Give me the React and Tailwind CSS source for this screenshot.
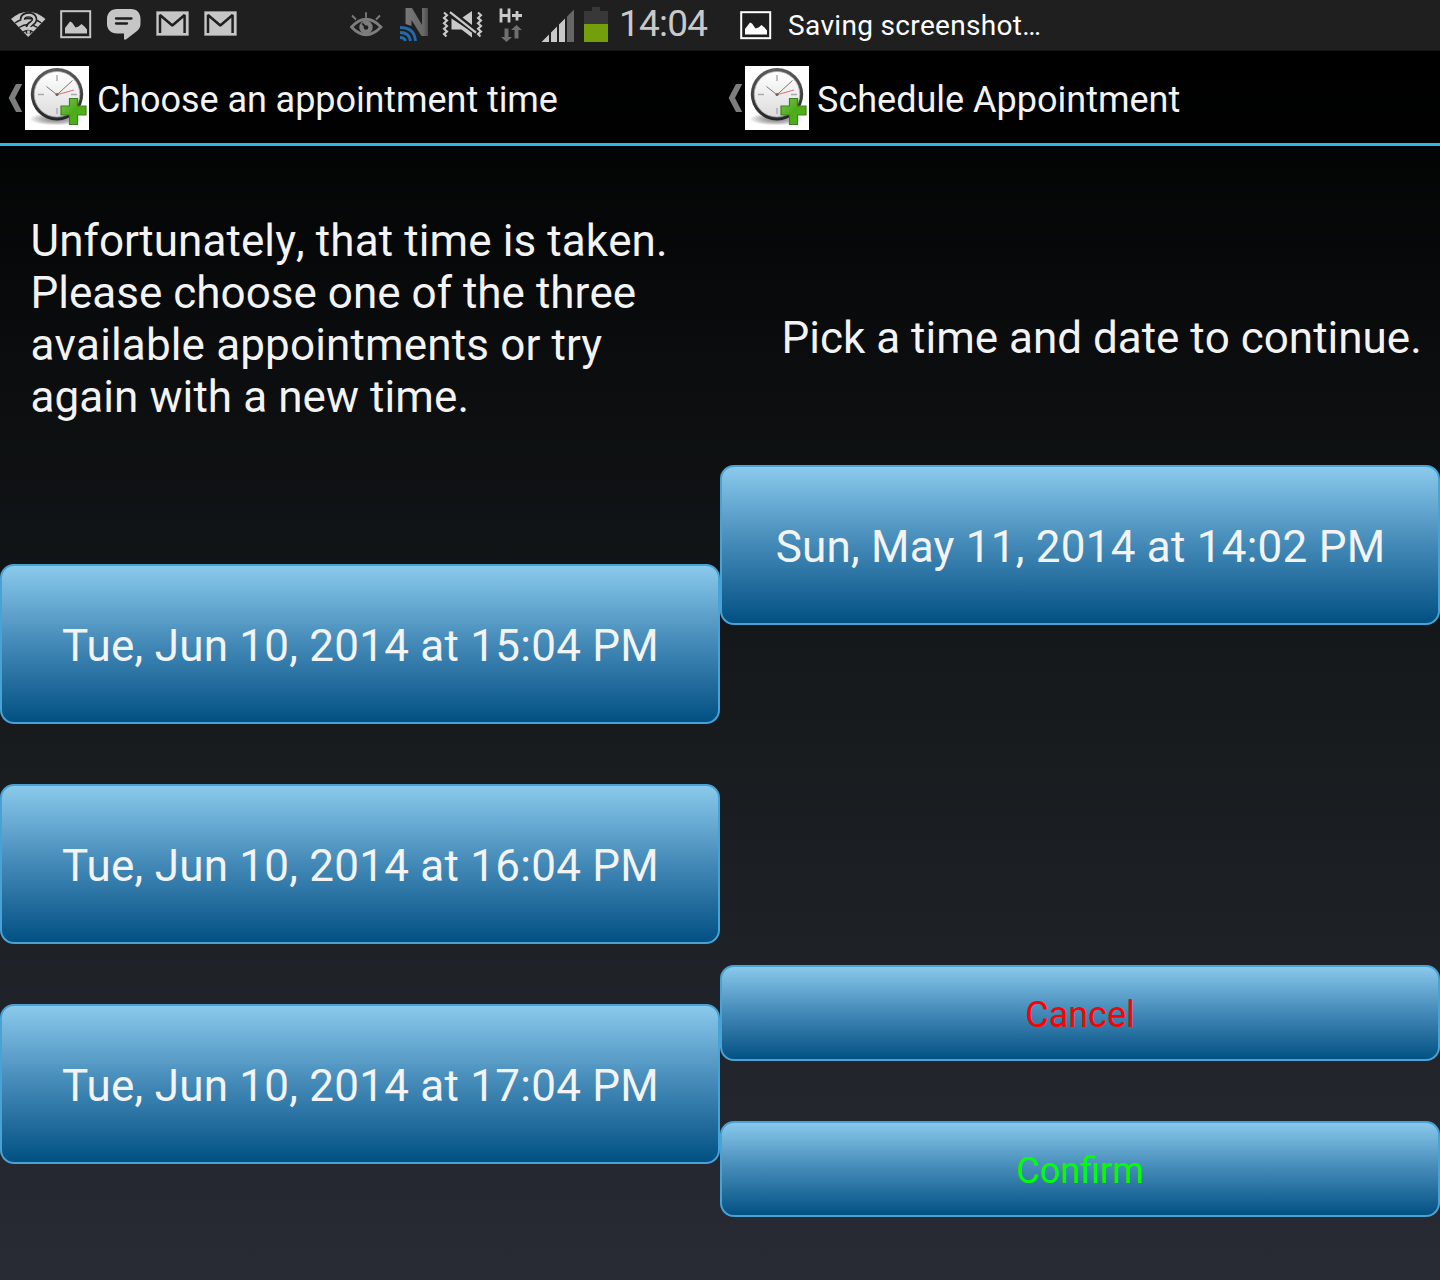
import React from "react";

function PictureIcon({ color }) {
  return (
    <svg width="32" height="30" viewBox="0 0 32 30">
      <rect x="1.2" y="1.2" width="29" height="26" fill="none" stroke={color} strokeWidth="2" />
      <path d="M5 23.500V18l5-6.500 2 1 3.500 5 3-1 3-2.500 3 2.500 2.500 3v4z" fill={color} />
    </svg>
  );
}

function WifiQuestionIcon() {
  return (
    <svg width="36" height="28" viewBox="0 0 36 28">
      <path d="M0 8Q17-6.500 34.500 8L17.200 26z" fill="#c6c6c6" />
      <path d="M4 12q13-9 26.500 0M8 16.500q9.500-6 18.500 0M12 21q5-3 10 0" fill="none" stroke="#1f1f1f" strokeWidth="1.400" />
      <path d="M11.500 8.500c0-6.500 12-6.500 12 0 0 4-6 4-6 7.500M17.500 19.500v3" fill="none" stroke="#1f1f1f" strokeWidth="5.600" />
      <path d="M11.500 9c0-6.500 12-6.500 12-.5 0 4-6 4-6 8.500M17.500 19.500v3" fill="none" stroke="#c6c6c6" strokeWidth="2.600" />
    </svg>
  );
}

function ChatIcon() {
  return (
    <svg width="34" height="31" viewBox="0 0 34 31">
      <path d="M10 0h14c6 0 9.500 4 9.500 10v5c0 3-1.500 5-3.500 7l-11 8.500h-2V24.500h-7C4 24.500 0 20.500 0 15v-5C0 4 4 0 10 0z" fill="#c6c6c6" />
      <path d="M9 9.500h15.500M9 14.500h11" stroke="#1f1f1f" strokeWidth="2.300" strokeLinecap="round" />
    </svg>
  );
}

function MailIcon() {
  return (
    <svg width="33" height="25" viewBox="0 0 33 25">
      <rect x="0" y="0" width="33" height="25" rx="1" fill="#8b8b8b" />
      <rect x="1" y="1" width="31" height="23" fill="#c6c6c6" />
      <path d="M4 22V4L16.300 14.500 28.600 4v18" fill="none" stroke="#1f1f1f" strokeWidth="2.500" strokeLinejoin="bevel" />
    </svg>
  );
}

function EyeIcon() {
  return (
    <svg width="33" height="25" viewBox="0 0 33 25">
      <path d="M1.500 15Q16-.5 31 15 16 30.500 1.500 15z" fill="none" stroke="#7d7d7d" strokeWidth="2.800" />
      <circle cx="16" cy="15.200" r="6.700" fill="#7d7d7d" />
      <circle cx="16" cy="15.500" r="2.300" fill="#1f1f1f" />
      <path d="M12.300 11.300l3 3.500" stroke="#1f1f1f" strokeWidth="1.800" />
      <path d="M2 3.500l4 4M16 .2v5.500M30 3.500l-4 4" stroke="#7d7d7d" strokeWidth="1.800" />
    </svg>
  );
}

function NfcIcon() {
  return (
    <svg width="30" height="34" viewBox="0 0 30 34">
      <defs>
        <linearGradient id="nfcMetal" x1="0" x2="1" y1="0" y2="0">
          <stop offset="0" stopColor="#777" />
          <stop offset=".8" stopColor="#686868" />
          <stop offset="1" stopColor="#4c4c4c" />
        </linearGradient>
      </defs>
      <path d="M5.500 0h6.500l10 17V0h6V28h-6.500L11.500 12v6L5.500 16z" fill="url(#nfcMetal)" />
      <g fill="none" stroke="#2569ab" strokeWidth="2.800">
        <path d="M0 19.500q14.500 0 15.500 13.500" />
        <path d="M0 24.500q9.500 0 10.500 8.500" />
        <path d="M0 29.500q4.500 0 5.500 3.500" />
      </g>
    </svg>
  );
}

function MuteIcon() {
  return (
    <svg width="42" height="28" viewBox="0 0 42 28">
      <g fill="none" stroke="#c9c9c9" strokeWidth="2.100">
        <path d="M2 2.500l3 2.700-3 2.700 3 2.700-3 2.700L5 16l-3 2.700 3 2.700-3 2.700 2.500 2.500" />
        <path d="M36 2.500l3 2.700-3 2.700 3 2.700-3 2.700 3 2.700-3 2.700 3 2.700-3 2.700 2.500 2.500" />
      </g>
      <path d="M9.500 8.500L30 22v5.500L19.500 19.500h-10zM20.500 7.500L30 1v14z" fill="#c9c9c9" />
      <path d="M8 2.200l26 20.500" stroke="#1f1f1f" strokeWidth="5" />
      <path d="M8 2.200l26 20.500" stroke="#c9c9c9" strokeWidth="2.200" />
    </svg>
  );
}

function DataIcon() {
  return (
    <svg width="24" height="38" viewBox="0 0 24 38">
      <path d="M2 4.500v14M10 4.500v14M2 11.500h8M13 11.500h10M18 7v9.500" fill="none" stroke="#c9c9c9" strokeWidth="2.800" />
      <path d="M5.500 24.500h4V33h3.500L7.500 38 2 33h3.500zM15.500 34.500V26H12l5.500-5 5.500 5h-3.500v8.500z" fill="#6f6f6f" />
    </svg>
  );
}

function SignalIcon() {
  return (
    <svg width="34" height="34" viewBox="0 0 34 34">
      <path d="M.5 33L8 25.500V33zM10 33v-9.500l6-6V33zM18 33V15.500l6-6V33z" fill="#c9c9c9" />
      <path d="M26 33V7.500l7-7V33z" fill="#666" />
    </svg>
  );
}

function BatteryIcon() {
  return (
    <svg width="24" height="35" viewBox="0 0 24 35">
      <path d="M8 0h8v4h8v13H0V4h8z" fill="#383838" />
      <path d="M0 17h24v18H0z" fill="#729f0b" />
    </svg>
  );
}

function ClockLogo() {
  return (
    <svg width="64" height="64" viewBox="0 0 64 64" className="shrink-0">
      <defs>
        <radialGradient id="logoShade">
          <stop offset="0" stopColor="#777" />
          <stop offset=".6" stopColor="#bbb" />
          <stop offset="1" stopColor="#fff" />
        </radialGradient>
        <linearGradient id="logoRim" x1="0" y1="0" x2="0" y2="1">
          <stop offset="0" stopColor="#5c5c5c" />
          <stop offset="1" stopColor="#242424" />
        </linearGradient>
        <linearGradient id="logoFace" x1="0" y1="0" x2="0" y2="1">
          <stop offset="0" stopColor="#fff" />
          <stop offset="1" stopColor="#dcdcdc" />
        </linearGradient>
        <linearGradient id="logoPlus" x1="0" y1="0" x2="1" y2="1">
          <stop offset="0" stopColor="#7bc64c" />
          <stop offset=".5" stopColor="#4cab17" />
          <stop offset="1" stopColor="#55b51c" />
        </linearGradient>
      </defs>
      <rect width="64" height="64" fill="#fff" />
      <ellipse cx="31" cy="53" rx="27" ry="6.500" fill="url(#logoShade)" />
      <circle cx="32" cy="28.300" r="26.200" fill="url(#logoRim)" />
      <circle cx="32" cy="28.300" r="22.800" fill="url(#logoFace)" stroke="#aaa" strokeWidth=".8" />
      <path d="M32 9v6M32 42v6M13 28.500h6M46 28.500h6" stroke="#aaa" strokeWidth="1.400" />
      <path d="M21.500 20.500L32 28.800 47.500 14.500" fill="none" stroke="#777" strokeWidth="1" />
      <path d="M32 28.800L49 24" stroke="#e0786f" strokeWidth="1.100" />
      <circle cx="32" cy="28.600" r="1.500" fill="#666" />
      <path d="M44.500 32.500h8v7.500h8.500v9h-8.500v9.500h-8V49H36v-9h8.500z" fill="url(#logoPlus)" stroke="#3a8420" strokeWidth="1.200" />
    </svg>
  );
}

function ActionBar({ title, titleClass }) {
  return (
    <header className="flex h-[95px] items-center border-b-[3px] border-[#33b5e5] bg-black/40 pl-[8px] pt-[2px] text-[36px] leading-[42px] text-[#f3f3f3]">
      <svg width="15" height="28" viewBox="0 0 15 28" className="mr-[2px]">
        <path d="M8 0h6.200L7 14l7.200 14H8L.6 14z" fill="#7d7d7d" />
      </svg>
      <ClockLogo />
      <h1 className={"ml-[8px] mt-[4px] whitespace-nowrap " + titleClass}>{title}</h1>
    </header>
  );
}

const buttonBase =
  "flex w-full items-center justify-center whitespace-nowrap rounded-[14px] border-2 border-[#48a2d6] bg-linear-to-b/srgb from-[#8bcbed] via-[#4389b7] to-[#004f82] bg-origin-border";

function SlotButton({ children }) {
  return (
    <button className={buttonBase + " h-[160px] pl-[1px] pt-[4px] text-[44px] leading-[52px] tracking-[0.24px] text-[#f3f3f3] [font-kerning:normal]"}>
      {children}
    </button>
  );
}

export default function App() {
  return (
    <main className="grid h-[1280px] w-[1440px] grid-cols-2 overflow-hidden bg-linear-to-b/srgb from-black from-4% via-[#15191b] via-52% to-[#282b34] font-['Roboto',sans-serif] text-[#f3f3f3] [font-kerning:none]">
      <section className="flex flex-col">
        <div className="flex h-[51px] items-start border-b border-[#151515] bg-[#1f1f1f]">
          <div className="ml-[11px] mt-[11px]"><WifiQuestionIcon /></div>
          <div className="ml-[13px] mt-[10px]"><PictureIcon color="#c6c6c6" /></div>
          <div className="ml-[15px] mt-[9px]"><ChatIcon /></div>
          <div className="ml-[15px] mt-[11px]"><MailIcon /></div>
          <div className="ml-[15px] mt-[11px]"><MailIcon /></div>
          <div className="ml-[113px] mt-[12px]"><EyeIcon /></div>
          <div className="ml-[17px] mt-[8px]"><NfcIcon /></div>
          <div className="ml-[12px] mt-[10px]"><MuteIcon /></div>
          <div className="ml-[15px] mt-[4px]"><DataIcon /></div>
          <div className="ml-[18px] mt-[9px]"><SignalIcon /></div>
          <div className="ml-[9px] mt-[7px]"><BatteryIcon /></div>
          <span className="ml-[11px] mt-[2px] text-[37px] leading-[44px] tracking-[-0.8px] text-[#c9c9c9]">14:04</span>
        </div>
        <ActionBar title="Choose an appointment time" titleClass="tracking-[-0.07px]" />
        <p className="mt-[69px] whitespace-nowrap pl-[30.5px] text-[44px] leading-[52px]">
          <span className="block tracking-[0.1px]">Unfortunately, that time is taken.</span>
          <span className="block tracking-[0.02px]">Please choose one of the three</span>
          <span className="block tracking-[0.15px]">available appointments or try</span>
          <span className="block tracking-[0.08px]">again with a new time.</span>
        </p>
        <div className="mt-[141px] flex flex-col gap-[60px]">
          <SlotButton>Tue, Jun 10, 2014 at 15:04 PM</SlotButton>
          <SlotButton>Tue, Jun 10, 2014 at 16:04 PM</SlotButton>
          <SlotButton>Tue, Jun 10, 2014 at 17:04 PM</SlotButton>
        </div>
      </section>
      <section className="flex flex-col">
        <div className="flex h-[51px] items-start border-b border-[#151515] bg-[#1f1f1f]">
          <div className="ml-[20px] mt-[11px]"><PictureIcon color="#ffffff" /></div>
          <span className="ml-[16px] mt-[9px] text-[28px] leading-[33px] tracking-[0.3px] text-white">Saving screenshot…</span>
        </div>
        <ActionBar title="Schedule Appointment" titleClass="" />
        <p className="mt-[166px] whitespace-nowrap pl-[61.5px] text-[44px] leading-[52px]">
          Pick a time and date to continue.
        </p>
        <div className="mt-[101px]">
          <SlotButton>Sun, May 11, 2014 at 14:02 PM</SlotButton>
        </div>
        <div className="mt-[340px] flex flex-col gap-[60px] text-[36px] leading-[42px]">
          <button className={buttonBase + " h-[96px] pt-[4px] text-[#ff0000]"}>Cancel</button>
          <button className={buttonBase + " h-[96px] pt-[4px] text-[#00ff00]"}>Confirm</button>
        </div>
      </section>
    </main>
  );
}
